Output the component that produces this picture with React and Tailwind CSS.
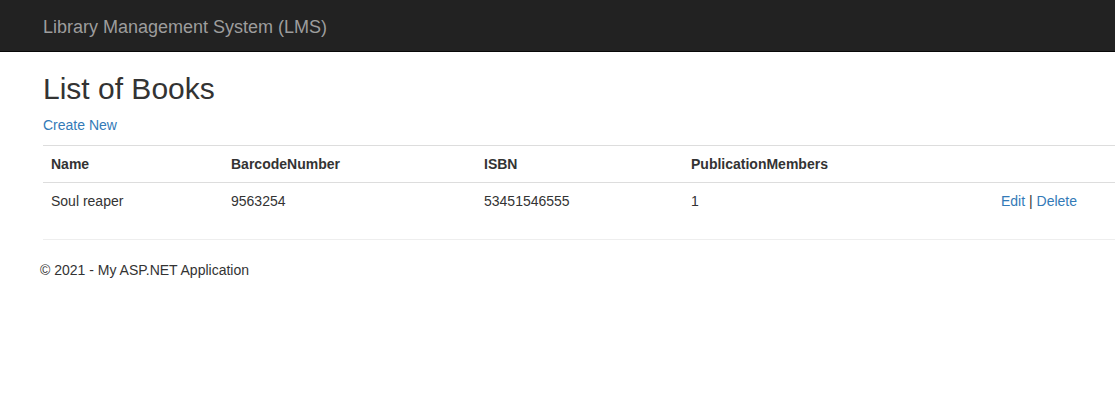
import React from 'react';

const books = [
  { name: 'Soul reaper', barcode: '9563254', isbn: '53451546555', members: '1' },
];

const font = { fontFamily: '"Liberation Sans", Arial, Helvetica, sans-serif' };

function Navbar() {
  return (
    <div className="h-[52px] bg-[#222] border-b border-[#080808]">
      <div className="pl-[43px] pt-[17px]">
        <span className="text-[18px] leading-[20px] text-[#9d9d9d]">Library Management System (LMS)</span>
      </div>
    </div>
  );
}

export default function App() {
  return (
    <div className="min-h-[400px] w-[1115px] overflow-hidden bg-white text-[14px] leading-[20px] text-[#333]" style={font}>
      <Navbar />
      <div className="pl-[43px]">
        <h2 className="mt-[20px] mb-[10px] text-[30px] leading-[33px] font-normal">List of Books</h2>
        <p className="mt-0 mb-[10px]">
          <a className="text-[#337ab7]">Create New</a>
        </p>
        <table className="table-fixed w-[1200px] border-collapse mb-[20px]">
          <colgroup>
            <col className="w-[180px]" />
            <col className="w-[253px]" />
            <col className="w-[207px]" />
            <col className="w-[310px]" />
            <col />
          </colgroup>
          <tbody>
            <tr className="border-t border-[#ddd]">
              <th className="p-[8px] text-left font-bold">Name</th>
              <th className="p-[8px] text-left font-bold">BarcodeNumber</th>
              <th className="p-[8px] text-left font-bold">ISBN</th>
              <th className="p-[8px] text-left font-bold">PublicationMembers</th>
              <th className="p-[8px]"></th>
            </tr>
            {books.map((b) => (
              <tr key={b.isbn} className="border-t border-[#ddd]">
                <td className="p-[8px]">{b.name}</td>
                <td className="p-[8px]">{b.barcode}</td>
                <td className="p-[8px]">{b.isbn}</td>
                <td className="p-[8px]">{b.members}</td>
                <td className="p-[8px]">
                  <a className="text-[#337ab7]">Edit</a> | <a className="text-[#337ab7]">Delete</a>
                </td>
              </tr>
            ))}
          </tbody>
        </table>
        <hr className="border-0 border-t border-[#eee] my-[20px]" />
        <footer>
          <p className="-ml-[3px]">© 2021 - My ASP.NET Application</p>
        </footer>
      </div>
    </div>
  );
}
